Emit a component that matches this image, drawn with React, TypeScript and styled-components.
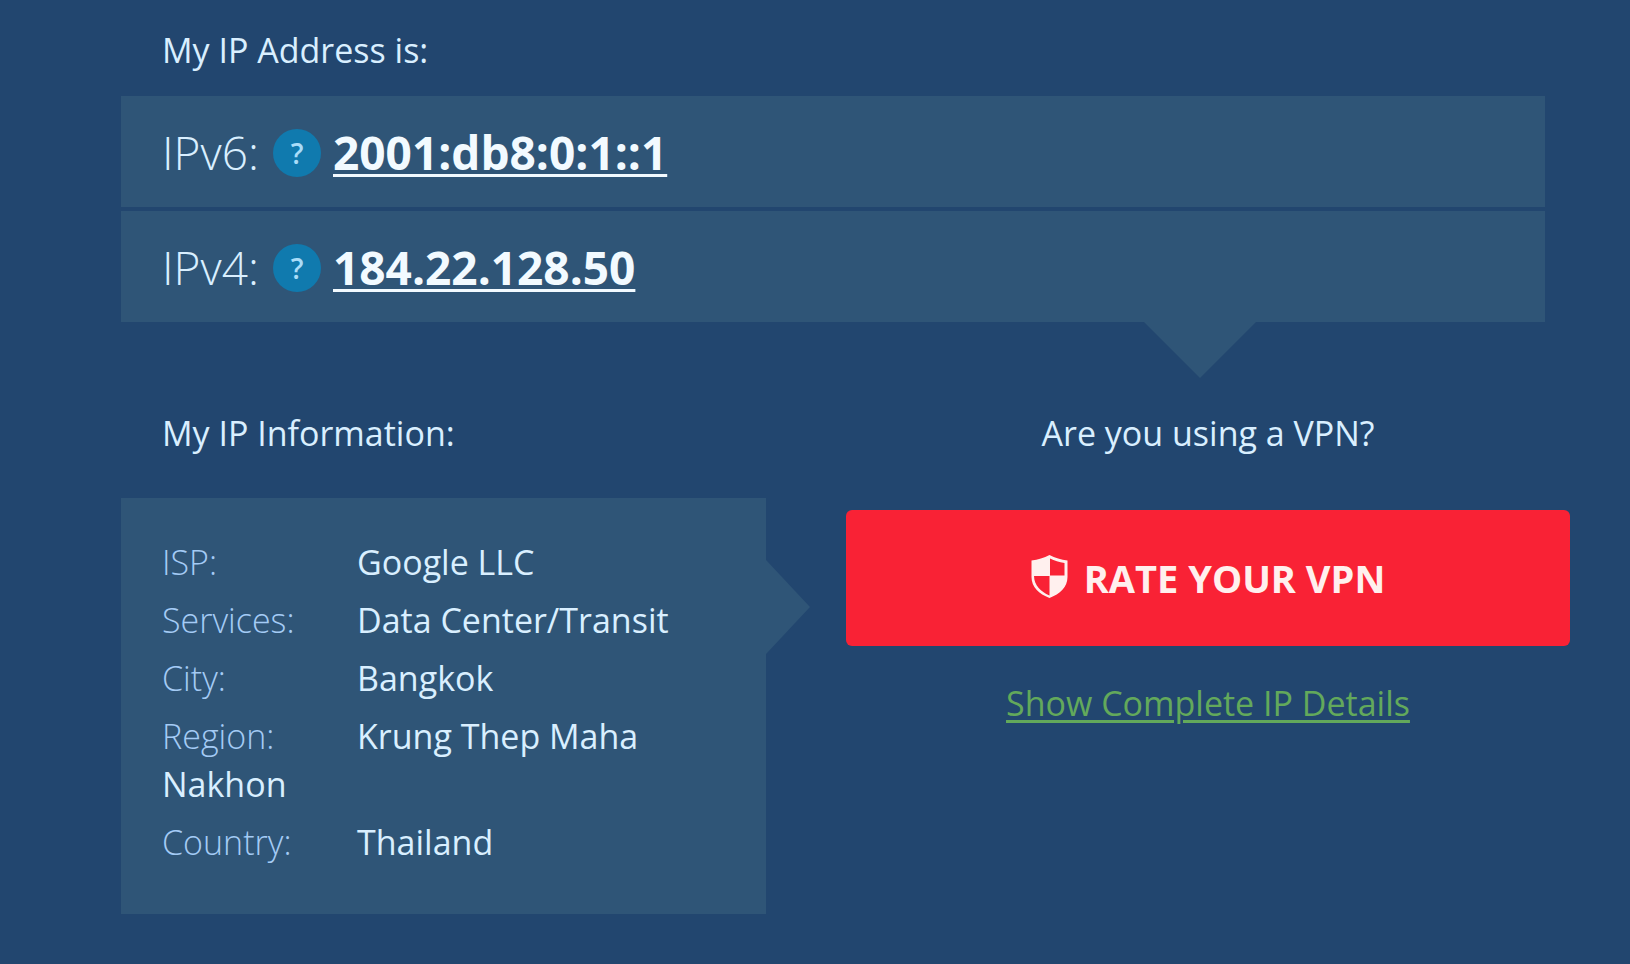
import React from 'react';
import styled, { createGlobalStyle } from 'styled-components';

const GlobalStyle = createGlobalStyle`
  *, *::before, *::after { box-sizing: border-box; }
  body {
    margin: 0;
    background: #22466f;
    color: #d9efff;
    font-family: 'Open Sans', sans-serif;
    font-size: 34px;
    line-height: 48px;
  }
`;

const panelColor = '#2f5577';

const Page = styled.main`
  min-height: 100vh;
  padding: 26px 60px 50px 121px;
`;

const Heading = styled.h2<{ $centered?: boolean }>`
  margin: 0;
  padding-left: ${(p) => (p.$centered ? '0' : '41px')};
  text-align: ${(p) => (p.$centered ? 'center' : 'left')};
  font-size: 34px;
  font-weight: 400;
`;

const AddressList = styled.section`
  position: relative;
  display: flex;
  flex-direction: column;
  gap: 4px;
  margin: 22px 25px 87px 0;

  &::after {
    content: '';
    position: absolute;
    top: 100%;
    right: 289px;
    border: 56px solid transparent;
    border-top-color: ${panelColor};
    border-bottom-width: 0;
  }
`;

const AddressRow = styled.div`
  display: flex;
  align-items: center;
  min-height: 111px;
  padding-left: 41px;
  background: ${panelColor};
  font-size: 46px;
`;

const Protocol = styled.span`
  width: 111px;
  font-weight: 300;
`;

const HelpButton = styled.button`
  width: 48px;
  height: 48px;
  margin: 3px 12px 0 0;
  padding: 0;
  border: 0;
  border-radius: 50%;
  background: #107aae;
  color: #a9dcf8;
  font: 600 28px/48px 'Open Sans', sans-serif;
  cursor: pointer;
`;

const AddressLink = styled.a`
  color: #f2faff;
  font-weight: 700;
  text-decoration: underline;
  text-decoration-thickness: 3px;
  text-underline-offset: 4px;
`;

const Columns = styled.div`
  display: grid;
  grid-template-columns: 645fr 724fr;
  column-gap: 80px;
`;

const InfoPanel = styled.ul`
  position: relative;
  display: flex;
  flex-direction: column;
  gap: 10px;
  margin: 41px 0 0;
  padding: 40px 41px 48px;
  list-style: none;
  background: ${panelColor};

  &::after {
    content: '';
    position: absolute;
    top: 62px;
    left: 100%;
    border: solid transparent;
    border-width: 47px 0 47px 44px;
    border-left-color: ${panelColor};
  }
`;

const InfoLabel = styled.span`
  display: inline-block;
  width: 195px;
  color: #a4cbf5;
  font-weight: 300;
`;

const RateButton = styled.button`
  display: flex;
  align-items: center;
  justify-content: center;
  gap: 16px;
  width: 100%;
  height: 136px;
  margin: 53px 0 33px;
  padding: 0;
  border: 0;
  border-radius: 6px;
  background: #f92235;
  color: #fff0ee;
  font: 700 38px/48px 'Open Sans', sans-serif;
  cursor: pointer;
`;

const ShieldIcon = styled.svg`
  width: 37px;
  height: 43px;
  margin-bottom: 4px;
`;

const DetailsLine = styled.p`
  margin: 0;
  text-align: center;
`;

const DetailsLink = styled.a`
  color: #63a95b;
  text-decoration: underline;
  text-decoration-thickness: 3px;
  text-underline-offset: 4px;
`;

const addresses = [
  { protocol: 'IPv6', value: '2001:db8:0:1::1' },
  { protocol: 'IPv4', value: '184.22.128.50' },
];

const details = [
  { label: 'ISP:', value: 'Google LLC' },
  { label: 'Services:', value: 'Data Center/Transit' },
  { label: 'City:', value: 'Bangkok' },
  { label: 'Region:', value: 'Krung Thep Maha Nakhon' },
  { label: 'Country:', value: 'Thailand' },
];

export default function App() {
  return (
    <>
      <GlobalStyle />
      <Page>
        <Heading>My IP Address is:</Heading>
        <AddressList>
          {addresses.map((a) => (
            <AddressRow key={a.protocol}>
              <Protocol>{a.protocol}:</Protocol>
              <HelpButton type="button">?</HelpButton>
              <AddressLink href="#">{a.value}</AddressLink>
            </AddressRow>
          ))}
        </AddressList>
        <Columns>
          <section>
            <Heading>My IP Information:</Heading>
            <InfoPanel>
              {details.map((d) => (
                <li key={d.label}>
                  <InfoLabel>{d.label}</InfoLabel>
                  {d.value}
                </li>
              ))}
            </InfoPanel>
          </section>
          <section>
            <Heading $centered>Are you using a VPN?</Heading>
            <RateButton type="button">
              <ShieldIcon viewBox="0 0 37 43" aria-hidden="true">
                <path
                  fill="currentColor"
                  fillRule="evenodd"
                  d="M18.500 0C13 3 7 4.800 0.500 5.500V22C0.500 32 8 39 18.500 43C29 39 36.500 32 36.500 22V5.500C30 4.800 24 3 18.500 0ZM19 3.500C23.500 5.700 28 7 33.500 8V20.500H19ZM3 21H18.500V40.500C9.500 36.500 3.300 30.500 3 21Z"
                />
              </ShieldIcon>
              RATE YOUR VPN
            </RateButton>
            <DetailsLine>
              <DetailsLink href="#">Show Complete IP Details</DetailsLink>
            </DetailsLine>
          </section>
        </Columns>
      </Page>
    </>
  );
}
